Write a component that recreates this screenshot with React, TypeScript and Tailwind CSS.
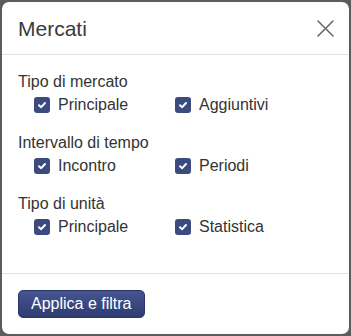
type Group = { title: string; options: string[] };

const groups: Group[] = [
  { title: "Tipo di mercato", options: ["Principale", "Aggiuntivi"] },
  { title: "Intervallo di tempo", options: ["Incontro", "Periodi"] },
  { title: "Tipo di unità", options: ["Principale", "Statistica"] },
];

function Check({ label }: { label: string }) {
  return (
    <label className="flex items-center h-6">
      <span className="flex items-center justify-center w-4 h-4 rounded-[3px] bg-[#3b4a7f]">
        <svg width="10" height="10" viewBox="0 0 10 10" fill="none">
          <path d="M2 5.2 L4.2 7.2 L8 3" stroke="#fff" strokeWidth="2" strokeLinecap="round" strokeLinejoin="round" />
        </svg>
      </span>
      <span className="ml-2">{label}</span>
    </label>
  );
}

export default function App() {
  return (
    <div className="w-[351px] h-[336px] bg-[#5c5c5c] p-[2px] font-['Liberation_Sans',Arial,sans-serif] text-[#333]">
      <div className="h-[332px] w-[347px] bg-white rounded-[7px] flex flex-col">
        <div className="h-[53px] flex items-center justify-between pl-4 pr-[15px] border-b border-[#e2e2e8]">
          <h2 className="text-[21px] leading-none text-[#3a3a3a]">Mercati</h2>
          <svg width="17" height="17" viewBox="0 0 17 17" fill="none">
            <path d="M1 1 L16 16 M16 1 L1 16" stroke="#6a6a6a" strokeWidth="1.6" strokeLinecap="round" />
          </svg>
        </div>
        <div className="flex flex-col gap-4 pl-4 pt-[17px] pb-[34px] text-[16px] border-b border-[#e2e2e8]">
          {groups.map((g) => (
            <div key={g.title}>
              <div className="leading-5">{g.title}</div>
              <div className="grid grid-cols-[141px_141px] ml-4 mt-px">
                {g.options.map((o) => (
                  <Check key={o} label={o} />
                ))}
              </div>
            </div>
          ))}
        </div>
        <div className="pl-4 pt-[16px]">
          <button className="h-[28px] px-3 rounded-[5px] bg-gradient-to-b from-[#45558f] to-[#2e3c72] text-white text-[16px] leading-none border border-[#2a3668]">
            Applica e filtra
          </button>
        </div>
      </div>
    </div>
  );
}
